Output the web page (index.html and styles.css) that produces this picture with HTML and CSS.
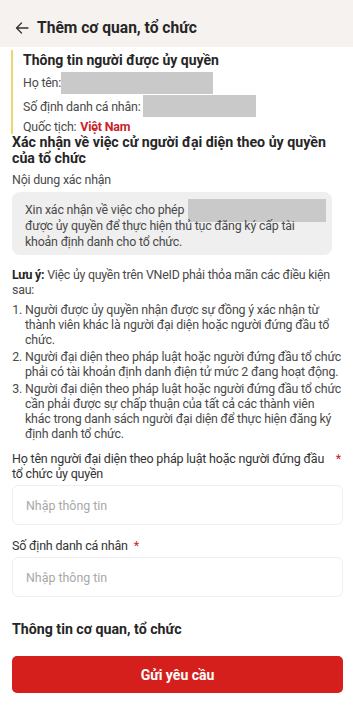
FILE: index.html
```html
<!DOCTYPE html>
<html lang="vi">
<head>
    <meta charset="UTF-8">
    <title>Thêm cơ quan, tổ chức</title>
    <link rel="stylesheet" href="styles.css">
</head>
<body>
    <div class="topbar">
        <svg class="back" width="14" height="12" viewBox="0 0 14 12">
            <path d="M13 6H1.5M6.5 1L1.5 6l5 5" fill="none" stroke="#333" stroke-width="1.3" stroke-linecap="round" stroke-linejoin="round"/>
        </svg>
        <span class="title">Thêm cơ quan, tổ chức</span>
    </div>

    <div class="page">
        <div class="person">
            <div class="person-title">Thông tin người được ủy quyền</div>
            <div class="row r1">Họ tên:<span class="mask mask-name"></span></div>
            <div class="row r2">Số định danh cá nhân: <span class="mask mask-id"></span></div>
            <div class="row r3">Quốc tịch: <b class="red">Việt Nam</b></div>
        </div>

        <h2 class="sec">Xác nhận về việc cử người đại diện theo ủy quyền<br>của tổ chức</h2>
        <div class="lbl">Nội dung xác nhận</div>
        <div class="confirm">
            Xin xác nhận về việc cho phép <span class="mask mask-org"></span><br>
            được ủy quyền để thực hiện thủ tục đăng ký cấp tài<br>
            khoản định danh cho tổ chức.
        </div>

        <p class="note"><b>Lưu ý:</b> Việc ủy quyền trên VNeID phải thỏa mãn các điều kiện<br>sau:</p>
        <ol class="rules">
            <li>Người được ủy quyền nhận được sự đồng ý xác nhận từ<br>thành viên khác là người đại diện hoặc người đứng đầu tổ<br>chức.</li>
            <li>Người đại diện theo pháp luật hoặc người đứng đầu tổ chức<br>phải có tài khoản định danh điện tử mức 2 đang hoạt động.</li>
            <li>Người đại diện theo pháp luật hoặc người đứng đầu tổ chức<br>cần phải được sự chấp thuận của tất cả các thành viên<br>khác trong danh sách người đại diện để thực hiện đăng ký<br>định danh tổ chức.</li>
        </ol>

        <div class="field">
            <label class="flabel"><span>Họ tên người đại diện theo pháp luật hoặc người đứng đầu<br>tổ chức ủy quyền</span><i>*</i></label>
            <input type="text" placeholder="Nhập thông tin">
        </div>
        <div class="field">
            <label class="flabel"><span>Số định danh cá nhân <i>*</i></span></label>
            <input type="text" placeholder="Nhập thông tin">
        </div>

        <div class="org">Thông tin cơ quan, tổ chức</div>
        <button class="send">Gửi yêu cầu</button>
    </div>
</body>
</html>
```

FILE: styles.css
```css
body {
    margin: 0;
    font-family: Roboto, "Noto Sans", sans-serif;
    color: #4a4a4a;
    background: #fff;
}
.topbar {
    height: 39px;
    padding: 8px 14px 0 15px;
    background: #f6f2ef;
    display: flex;
    align-items: center;
}
.back {
    margin-right: 8px;
}
.title {
    font-size: 15.6px;
    font-weight: 700;
    color: #262626;
}
.page {
    padding: 0 10px 0 12px;
}
.person {
    margin: 3px 0 0 -1px;
    border-left: 2px solid #efd86a;
    padding-left: 10px;
    font-size: 12.4px;
    letter-spacing: -0.2px;
}
.person-title {
    font-size: 14px;
    font-weight: 700;
    color: #262626;
    line-height: 20px;
    letter-spacing: 0;
}
.row {
    display: flex;
    align-items: center;
}
.r1 { height: 23px; margin-top: 1px; }
.r2 { height: 24px; }
.r3 { height: 16px; }
.mask {
    display: inline-block;
    background: #c9c9c9;
}
.mask-name { width: 152px; height: 22px; }
.mask-id { width: 113px; height: 22px; margin-left: 3px; }
.red { color: #c8242a; margin-left: 4px; }
.sec {
    margin: 1px 0 0;
    font-size: 14.2px;
    line-height: 15.5px;
    font-weight: 700;
    color: #262626;
}
.lbl {
    margin-top: 6px;
    font-size: 12.4px;
    line-height: 16px;
    letter-spacing: -0.2px;
}
.confirm {
    margin: 4px 11px 0 0;
    background: #efefef;
    border-radius: 8px;
    padding: 10px 6px 5px 13px;
    font-size: 12.4px;
    line-height: 16px;
    letter-spacing: -0.2px;
    white-space: nowrap;
}
.mask-org {
    width: 138px;
    height: 23px;
    margin: -4px 0 -4px 1px;
    vertical-align: middle;
}
.note {
    margin: 12px 0 0;
    font-size: 12.4px;
    line-height: 15px;
    letter-spacing: -0.25px;
}
.note b {
    color: #262626;
}
.rules {
    margin: 5px 0 0;
    padding-left: 13px;
    font-size: 12.4px;
    line-height: 15px;
    letter-spacing: -0.2px;
}
.rules li {
    margin-bottom: 2px;
}
.field {
    margin-top: 10px;
}
.field + .field {
    margin-top: 13px;
}
.flabel {
    display: flex;
    font-size: 12.5px;
    line-height: 15px;
    letter-spacing: -0.2px;
    color: #333;
}
.flabel span {
    flex: 1;
    white-space: nowrap;
}
.flabel i {
    font-style: normal;
    color: #c8242a;
    padding: 0 2px 0 6px;
}
.flabel span i {
    padding-left: 3px;
}
.field input {
    display: block;
    box-sizing: border-box;
    width: 100%;
    height: 40px;
    margin-top: 4px;
    border: 1px solid #efefef;
    border-radius: 6px;
    padding: 0 13px;
    font-family: inherit;
    font-size: 12.4px;
}
.field input::placeholder {
    color: #a8a8a8;
}
.org {
    margin-top: 23px;
    font-size: 14.2px;
    line-height: 18px;
    font-weight: 700;
    color: #262626;
}
.send {
    display: block;
    width: 100%;
    height: 37px;
    margin-top: 18px;
    border: 0;
    border-radius: 5px;
    background: #d41f1c;
    color: #fff;
    font-family: inherit;
    font-size: 14px;
    font-weight: 700;
}
```
